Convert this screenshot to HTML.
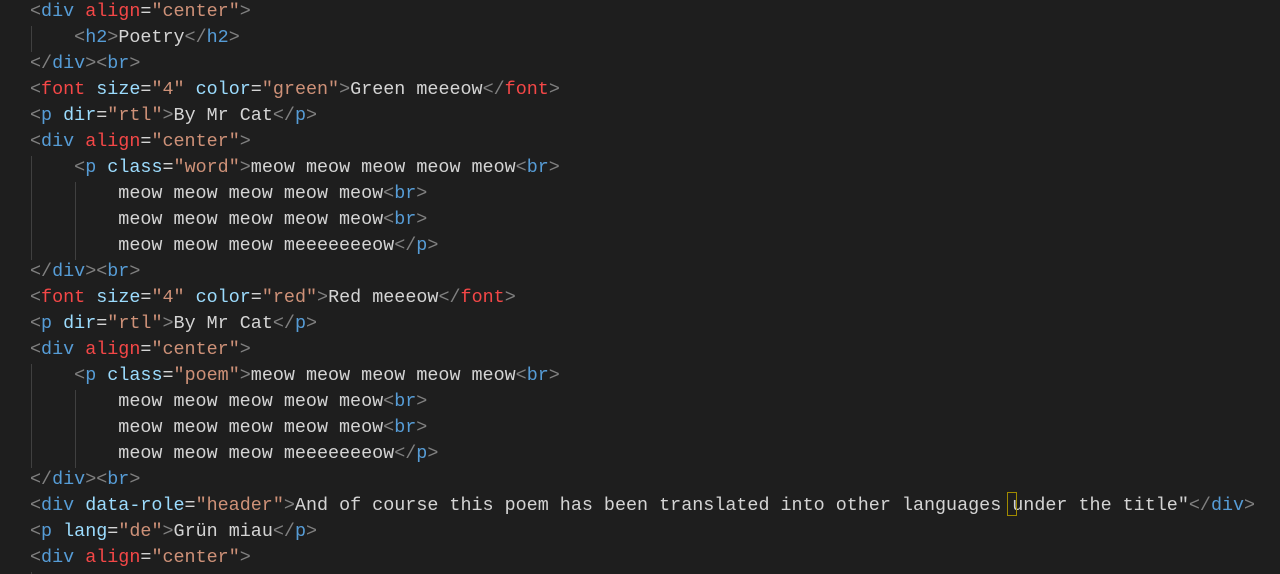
<!DOCTYPE html>
<html><head><meta charset="utf-8"><style>
body{margin:0;background:#1e1e1e;width:1280px;height:574px;overflow:hidden;position:relative}
pre{margin:0;position:absolute;left:30px;top:-1px;font-family:"Liberation Mono",monospace;font-size:18.4px;line-height:26px;color:#d4d4d4;white-space:pre}
.b{color:#808080}.t{color:#569cd6}.r{color:#f44747}.a{color:#9cdcfe}.s{color:#ce9178}
.g{position:absolute;width:1px;background:#404040}
.cur{position:absolute;left:1007px;top:492px;width:10px;height:24px;border:1px solid #a08a00;box-sizing:border-box}
</style></head><body>
<div class="g" style="left:31px;top:26px;height:26px"></div>
<div class="g" style="left:31px;top:156px;height:104px"></div>
<div class="g" style="left:75px;top:182px;height:78px"></div>
<div class="g" style="left:31px;top:364px;height:104px"></div>
<div class="g" style="left:75px;top:390px;height:78px"></div>
<div class="g" style="left:31px;top:572px;height:2px"></div>
<pre><span class="b">&lt;</span><span class="t">div</span> <span class="r">align</span>=<span class="s">"center"</span><span class="b">&gt;</span>
    <span class="b">&lt;</span><span class="t">h2</span><span class="b">&gt;</span>Poetry<span class="b">&lt;/</span><span class="t">h2</span><span class="b">&gt;</span>
<span class="b">&lt;/</span><span class="t">div</span><span class="b">&gt;&lt;</span><span class="t">br</span><span class="b">&gt;</span>
<span class="b">&lt;</span><span class="r">font</span> <span class="a">size</span>=<span class="s">"4"</span> <span class="a">color</span>=<span class="s">"green"</span><span class="b">&gt;</span>Green meeeow<span class="b">&lt;/</span><span class="r">font</span><span class="b">&gt;</span>
<span class="b">&lt;</span><span class="t">p</span> <span class="a">dir</span>=<span class="s">"rtl"</span><span class="b">&gt;</span>By Mr Cat<span class="b">&lt;/</span><span class="t">p</span><span class="b">&gt;</span>
<span class="b">&lt;</span><span class="t">div</span> <span class="r">align</span>=<span class="s">"center"</span><span class="b">&gt;</span>
    <span class="b">&lt;</span><span class="t">p</span> <span class="a">class</span>=<span class="s">"word"</span><span class="b">&gt;</span>meow meow meow meow meow<span class="b">&lt;</span><span class="t">br</span><span class="b">&gt;</span>
        meow meow meow meow meow<span class="b">&lt;</span><span class="t">br</span><span class="b">&gt;</span>
        meow meow meow meow meow<span class="b">&lt;</span><span class="t">br</span><span class="b">&gt;</span>
        meow meow meow meeeeeeeow<span class="b">&lt;/</span><span class="t">p</span><span class="b">&gt;</span>
<span class="b">&lt;/</span><span class="t">div</span><span class="b">&gt;&lt;</span><span class="t">br</span><span class="b">&gt;</span>
<span class="b">&lt;</span><span class="r">font</span> <span class="a">size</span>=<span class="s">"4"</span> <span class="a">color</span>=<span class="s">"red"</span><span class="b">&gt;</span>Red meeeow<span class="b">&lt;/</span><span class="r">font</span><span class="b">&gt;</span>
<span class="b">&lt;</span><span class="t">p</span> <span class="a">dir</span>=<span class="s">"rtl"</span><span class="b">&gt;</span>By Mr Cat<span class="b">&lt;/</span><span class="t">p</span><span class="b">&gt;</span>
<span class="b">&lt;</span><span class="t">div</span> <span class="r">align</span>=<span class="s">"center"</span><span class="b">&gt;</span>
    <span class="b">&lt;</span><span class="t">p</span> <span class="a">class</span>=<span class="s">"poem"</span><span class="b">&gt;</span>meow meow meow meow meow<span class="b">&lt;</span><span class="t">br</span><span class="b">&gt;</span>
        meow meow meow meow meow<span class="b">&lt;</span><span class="t">br</span><span class="b">&gt;</span>
        meow meow meow meow meow<span class="b">&lt;</span><span class="t">br</span><span class="b">&gt;</span>
        meow meow meow meeeeeeeow<span class="b">&lt;/</span><span class="t">p</span><span class="b">&gt;</span>
<span class="b">&lt;/</span><span class="t">div</span><span class="b">&gt;&lt;</span><span class="t">br</span><span class="b">&gt;</span>
<span class="b">&lt;</span><span class="t">div</span> <span class="a">data-role</span>=<span class="s">"header"</span><span class="b">&gt;</span>And of course this poem has been translated into other languages under the title"<span class="b">&lt;/</span><span class="t">div</span><span class="b">&gt;</span>
<span class="b">&lt;</span><span class="t">p</span> <span class="a">lang</span>=<span class="s">"de"</span><span class="b">&gt;</span>Grün miau<span class="b">&lt;/</span><span class="t">p</span><span class="b">&gt;</span>
<span class="b">&lt;</span><span class="t">div</span> <span class="r">align</span>=<span class="s">"center"</span><span class="b">&gt;</span></pre>
<div class="cur"></div>
</body></html>
